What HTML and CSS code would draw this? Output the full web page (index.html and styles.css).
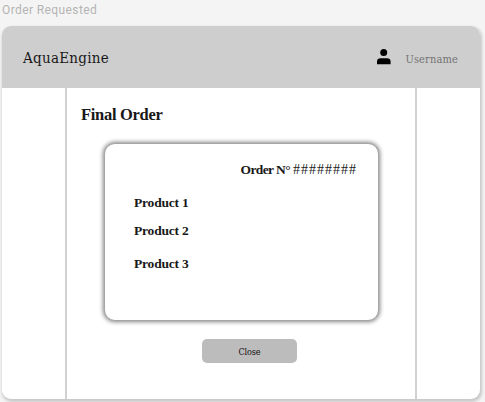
FILE: index.html
```html
<!DOCTYPE html>
<html lang="en">
<head>
<meta charset="utf-8">
<title>Order Requested</title>
<link rel="stylesheet" href="styles.css">
</head>
<body>
<div class="frame-label">Order Requested</div>
<div class="window">
  <header class="topbar">
    <span class="brand">AquaEngine</span>
    <div class="user">
      <svg class="avatar" viewBox="0 0 14 16" width="14" height="16"><circle cx="6.7" cy="3.6" r="3.5"/><path d="M0 15.3V12.5C0 10.3 1.4 9.2 3.6 9.2H10C12.2 9.2 13.6 10.3 13.6 12.5V15.3Z"/></svg>
      <span class="username">Username</span>
    </div>
  </header>
  <main class="content">
    <h1 class="title">Final Order</h1>
    <section class="card">
      <div class="order-number"><b>Order N°</b><span class="hashes">########</span></div>
      <ul class="products">
        <li>Product 1</li>
        <li>Product 2</li>
        <li>Product 3</li>
      </ul>
    </section>
    <button class="close">Close</button>
  </main>
</div>
</body>
</html>
```
FILE: styles.css
```css
* { box-sizing: border-box; }
body {
  margin: 0;
  height: 402px;
  overflow: hidden;
  background: #f4f4f4;
  font-family: "Liberation Serif", serif;
  color: #181818;
}
.frame-label {
  height: 26px;
  padding: 3px 0 0 2px;
  font: 12px/14px Roboto, sans-serif;
  letter-spacing: 0.4px;
  color: #b5b5b5;
  white-space: nowrap;
}
.window {
  width: 478px;
  height: 373px;
  margin-left: 2px;
  border-radius: 9px;
  background: #fff;
  box-shadow: 1px 2px 3px 1px rgba(0, 0, 0, 0.18);
  overflow: hidden;
}
.topbar {
  height: 62px;
  display: flex;
  align-items: center;
  justify-content: space-between;
  padding: 0 22px 0 21px;
  background: #cecece;
}
.brand {
  margin-top: 1px;
  font: 15px/20px "DejaVu Serif Condensed", "DejaVu Serif", serif;
  font-stretch: condensed;
  letter-spacing: 0.28px;
}
.user { display: flex; align-items: center; }
.avatar { margin-right: 14px; }
.username {
  margin-top: 5px;
  font: 11px/16px "DejaVu Serif Condensed", "DejaVu Serif", serif;
  font-stretch: condensed;
  letter-spacing: 0.13px;
  color: #737373;
}
.content {
  width: 352px;
  height: 311px;
  margin-left: 63px;
  padding: 17px 0 0 14px;
  border: solid #d0d0d0;
  border-width: 0 2px;
}
.title {
  margin: 0;
  font-size: 16.5px;
  line-height: 20px;
  letter-spacing: -0.3px;
}
.card {
  width: 275px;
  height: 178px;
  margin: 18px 0 0 23px;
  padding: 18px 22px 0 29px;
  border: 1px solid #a5a5a5;
  border-radius: 11px;
  background: #fff;
  box-shadow: 0 0 4px 1px rgba(0, 0, 0, 0.48);
}
.order-number {
  display: flex;
  justify-content: flex-end;
  gap: 3px;
  font-size: 13.5px;
  line-height: 16px;
  letter-spacing: -0.6px;
}
.hashes { font-size: 14px; letter-spacing: 1px; margin-right: -1px; }
.products {
  margin: 16px 0 0;
  padding: 0;
  list-style: none;
  font-size: 13.5px;
  font-weight: bold;
  line-height: 18px;
  letter-spacing: -0.2px;
}
.products li { margin-bottom: 10px; }
.products li:last-child { margin-top: 15px; }
.close {
  display: block;
  width: 95px;
  height: 24px;
  margin: 18px 0 0 121px;
  padding: 2px 0 0;
  border: 0;
  border-radius: 5px;
  background: #bcbcbc;
  font: 9px/22px "DejaVu Serif Condensed", "DejaVu Serif", serif;
  font-stretch: condensed;
  letter-spacing: -0.1px;
  color: #111;
}
```
